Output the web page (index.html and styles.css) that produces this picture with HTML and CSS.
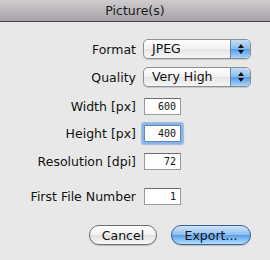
FILE: index.html
```html
<!DOCTYPE html>
<html lang="en">
<head>
    <meta charset="UTF-8">
    <title>Picture(s)</title>
    <link rel="stylesheet" href="styles.css">
</head>
<body>
    <div class="window">
        <div class="title-bar">Picture(s)</div>

        <div class="form">
            <label class="label">Format</label>
            <div class="popup">
                <span class="popup-value">JPEG</span>
                <span class="popup-arrows"><i class="up"></i><i class="down"></i></span>
            </div>

            <label class="label tight">Quality</label>
            <div class="popup tight">
                <span class="popup-value">Very High</span>
                <span class="popup-arrows"><i class="up"></i><i class="down"></i></span>
            </div>

            <label class="label loose">Width [px]</label>
            <div class="field loose">600</div>

            <label class="label">Height [px]</label>
            <div class="field focused">400</div>

            <label class="label loose">Resolution [dpi]</label>
            <div class="field loose">72</div>

            <label class="label wide">First File Number</label>
            <div class="field wide">1</div>
        </div>

        <div class="buttons">
            <button class="btn">Cancel</button>
            <button class="btn default">Export...</button>
        </div>
    </div>
</body>
</html>
```

FILE: styles.css
```css
body {
    margin: 0;
    background: #e8e8e8;
    font-family: "DejaVu Sans", "Liberation Sans", sans-serif;
    color: #111;
}

.window {
    width: 270px;
    height: 260px;
    background: #e8e8e8;
}

.title-bar {
    height: 21px;
    line-height: 21px;
    text-align: center;
    font-size: 12.5px;
    color: #1a1a1a;
    background: linear-gradient(#cfcccf, #a6a2a7);
    border-bottom: 1px solid #4a444c;
}

.form {
    display: grid;
    grid-template-columns: 136px 108px;
    column-gap: 7px;
    row-gap: 10px;
    align-items: center;
    padding-top: 17px;
}

.label {
    text-align: right;
    font-size: 12.5px;
    white-space: nowrap;
}

/* per-row spacing tweaks, applied to both cells of a row */
.tight {
    margin-top: -2px;
}

.loose {
    margin-top: 1px;
}

.wide {
    margin-top: 8px;
}

.popup {
    height: 18px;
    border: 1px solid #8f8f8f;
    border-radius: 5px;
    background: linear-gradient(#ffffff, #f1f1f1 50%, #e4e4e4 51%, #f6f6f6);
    display: flex;
    overflow: hidden;
    box-shadow: 0 1px 1px rgba(0,0,0,0.15);
}

.popup-value {
    flex: 1;
    font-size: 12.5px;
    line-height: 18px;
    padding-left: 8px;
}

.popup-arrows {
    width: 19px;
    border-left: 1px solid #5b86b8;
    background: linear-gradient(#c4def6, #8cbcec 48%, #5a9be2 52%, #a6d6fb);
    display: flex;
    flex-direction: column;
    align-items: center;
    justify-content: center;
    gap: 2px;
}

.popup-arrows i {
    width: 0;
    height: 0;
    border-left: 3px solid transparent;
    border-right: 3px solid transparent;
}

.popup-arrows .up {
    border-bottom: 4px solid #111;
}

.popup-arrows .down {
    border-top: 4px solid #111;
}

.field {
    width: 31px;
    height: 15px;
    margin-left: 1px;
    padding-right: 4px;
    background: #fff;
    border: 1px solid #9a9a9a;
    border-top-color: #6e6e6e;
    font-family: "DejaVu Sans Mono", monospace;
    font-size: 10px;
    line-height: 15px;
    text-align: right;
}

.field.focused {
    border-color: #5e88bd;
    box-shadow: 0 0 0 2px #8ab3e6, 0 0 1px 3px rgba(110,160,225,0.6);
    border-radius: 1px;
}

.buttons {
    display: flex;
    justify-content: flex-end;
    gap: 14px;
    padding: 20px 19px 0 0;
}

.btn {
    height: 20px;
    padding: 0;
    border: 1px solid #6f6f6f;
    border-radius: 10px;
    font-family: "DejaVu Sans", "Liberation Sans", sans-serif;
    font-size: 12.5px;
    color: #111;
    background: linear-gradient(#ffffff, #f2f2f2 50%, #e0e0e0 52%, #fafafa);
    box-shadow: 0 1px 1px rgba(0,0,0,0.2);
    width: 68px;
}

.btn.default {
    width: 80px;
    border-color: #3c5f95;
    background: linear-gradient(#cfe4f8, #8ebff0 48%, #5b9ee8 52%, #b2e0fd);
}
```
